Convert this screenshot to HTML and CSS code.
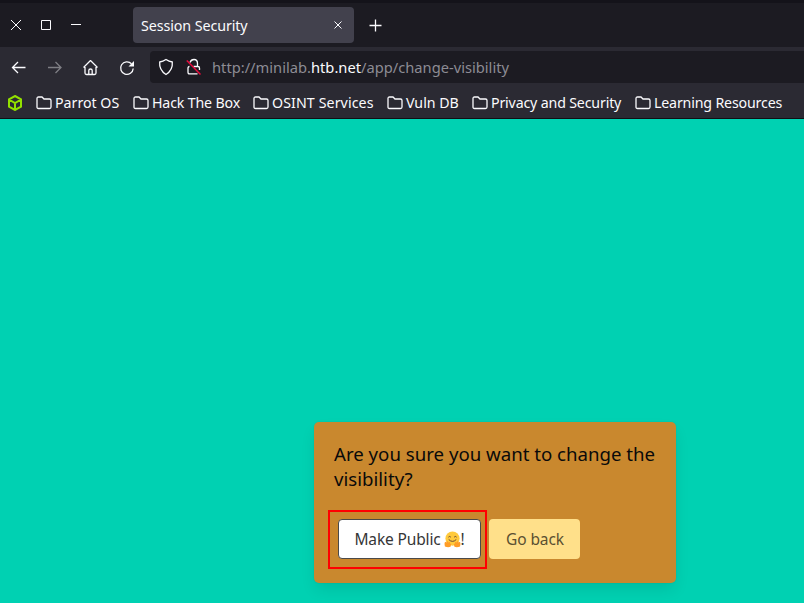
FILE: index.html
```html
<!DOCTYPE html>
<html lang="en">
<head>
<meta charset="utf-8">
<title>Session Security</title>
<link rel="stylesheet" href="styles.css">
</head>
<body>
<header class="browser">
  <div class="tabs">
    <div class="window-controls">
      <svg width="12" height="12" viewBox="0 0 12 12"><path d="M1 1l10 10M11 1L1 11"/></svg>
      <svg width="12" height="12" viewBox="0 0 12 12"><path d="M1.5 1.5h9v9h-9z"/></svg>
      <svg width="12" height="12" viewBox="0 0 12 12"><path d="M1 5.5h10"/></svg>
    </div>
    <div class="tab"><span class="tab-title">Session Security</span>
      <svg width="8" height="8" viewBox="0 0 8 8"><path d="M.5.5l7 7M7.5.5l-7 7"/></svg>
    </div>
    <svg class="new-tab" width="13" height="13" viewBox="0 0 13 13"><path d="M6.5.5v12M.5 6.5h12"/></svg>
  </div>
  <div class="toolbar">
    <nav class="nav">
      <svg width="16" height="16" viewBox="0 0 16 16"><path d="M14.500 7.500H1.500M7 2L1.500 7.500 7 13"/></svg>
      <svg class="disabled" width="16" height="16" viewBox="0 0 16 16"><path d="M1 7.500h13M8.500 2L14 7.500 8.500 13"/></svg>
      <svg width="16" height="16" viewBox="0 0 16 16"><path d="M.5 7.500l7-7 7 7M2 7v6q0 1.500 1.500 1.500h8q1.500 0 1.500-1.500V7M5.800 14.500v-4q0-1.500 1.700-1.500t1.700 1.500v4"/></svg>
      <svg width="16" height="16" viewBox="0 0 16 16"><path d="M14.200 8.500A6.300 6.300 0 1 1 12.500 3.800"/><path class="solid" d="M15 1v5.500H9.500z"/></svg>
    </nav>
    <div class="address">
      <svg width="16" height="18" viewBox="0 0 16 18"><path d="M8 1.500Q11 3.600 14.300 4q.7 8-6.300 12.500Q1 12 1.700 4 5 3.600 8 1.500z"/></svg>
      <svg class="lock" width="16" height="18" viewBox="0 0 16 18"><path d="M4 4.500Q5 1.500 8 1.500q3.500 0 3.500 4V8M7.500 8.500H12q1.500 0 1.500 1.500v2M11.500 15.800H3.500Q2 15.800 2 14.300V10q0-1.500 1.500-1.500"/><path class="slash" d="M.8 2.500l13.700 14"/></svg>
      <span class="url">http://minilab.<b>htb.net</b>/app/change-visibility</span>
    </div>
  </div>
  <div class="bookmarks">
    <svg class="cube" width="16" height="16" viewBox="0 0 16 16"><path d="M8 1l6 3.300v7.400L8 15l-6-3.300V4.300zM2 4.500L8 8l6-3.500M8 8v7"/></svg>
    <div class="bookmark b1"><svg width="16" height="14" viewBox="0 0 16 14"><path d="M1 11V2.500Q1 1 2.500 1H6l2 2h5.500Q15 3 15 4.500V11q0 1.500-1.500 1.500h-11Q1 12.500 1 11z"/></svg><span>Parrot OS</span></div>
    <div class="bookmark b2"><svg width="16" height="14" viewBox="0 0 16 14"><path d="M1 11V2.500Q1 1 2.500 1H6l2 2h5.500Q15 3 15 4.500V11q0 1.500-1.500 1.500h-11Q1 12.500 1 11z"/></svg><span>Hack The Box</span></div>
    <div class="bookmark b3"><svg width="16" height="14" viewBox="0 0 16 14"><path d="M1 11V2.500Q1 1 2.500 1H6l2 2h5.500Q15 3 15 4.500V11q0 1.500-1.500 1.500h-11Q1 12.500 1 11z"/></svg><span>OSINT Services</span></div>
    <div class="bookmark b4"><svg width="16" height="14" viewBox="0 0 16 14"><path d="M1 11V2.500Q1 1 2.500 1H6l2 2h5.500Q15 3 15 4.500V11q0 1.500-1.500 1.500h-11Q1 12.500 1 11z"/></svg><span>Vuln DB</span></div>
    <div class="bookmark b5"><svg width="16" height="14" viewBox="0 0 16 14"><path d="M1 11V2.500Q1 1 2.500 1H6l2 2h5.500Q15 3 15 4.500V11q0 1.500-1.500 1.500h-11Q1 12.500 1 11z"/></svg><span>Privacy and Security</span></div>
    <div class="bookmark b6"><svg width="16" height="14" viewBox="0 0 16 14"><path d="M1 11V2.500Q1 1 2.500 1H6l2 2h5.500Q15 3 15 4.500V11q0 1.500-1.500 1.500h-11Q1 12.500 1 11z"/></svg><span>Learning Resources</span></div>
  </div>
</header>
<main class="page">
  <section class="card">
    <p class="question">Are you sure you want to change the<br>visibility?</p>
    <div class="actions">
      <div class="highlight">
        <button class="button public"><span>Make Public</span><svg class="hug" width="17" height="17" viewBox="0 0 18 17"><circle class="face" cx="9" cy="7.500" r="7.500"/><path class="features" d="M4.700 6q1.200-1.500 2.500 0M10.800 6q1.200-1.500 2.500 0M5 8.500q4 4 8 0"/><path class="hands" d="M1 16q-1-4 .3-5l1.200.8.8-2 1.300 2 1.500-1 .3 2 1.300.5-.8 3Q4 17 1 16zM17 16q1-4-.3-5l-1.200.8-.8-2-1.300 2-1.500-1-.3 2-1.300.5.800 3Q14 17 17 16z"/></svg><span>!</span></button>
      </div>
      <button class="button back">Go back</button>
    </div>
  </section>
</main>
</body>
</html>
```
FILE: styles.css
```css
* { box-sizing: border-box; }
body { margin: 0; width: 804px; height: 603px; overflow: hidden; background: #00d1b2; font-family: "Noto Sans", sans-serif; }
svg { display: block; flex: none; fill: none; stroke: #fbfbfe; stroke-width: 1.3; }
.browser { height: 119px; background: #2b2a33; border-bottom: 1px solid #101014; color: #fbfbfe; }
.tabs { height: 47px; display: flex; align-items: flex-start; background: #1c1b22; border-top: 3px solid #14131a; }
.window-controls { width: 133px; padding: 16px 0 0 10px; display: flex; gap: 18px; }
.window-controls svg { stroke-width: 1; }
.tab { width: 221px; height: 36px; margin-top: 4px; padding: 0 12px 0 8px; display: flex; align-items: center; justify-content: space-between; border-radius: 4px; background: #42414d; font-size: 14.300px; letter-spacing: -.1px; }
.tab svg { stroke-width: 1; }
.new-tab { margin: 16px 0 0 15px; }
.toolbar { height: 40px; padding-top: 4px; display: flex; }
.nav { width: 150px; padding: 9px 0 0 11px; display: flex; gap: 20px; }
.disabled { opacity: .4; }
.address { flex: 1; height: 32px; padding-left: 8px; display: flex; align-items: center; border-radius: 4px 0 0 4px; background: #1c1b22; }
.lock { margin-left: 12px; }
.slash { stroke: #e80b3d; stroke-width: 1.500; }
.url { margin-left: 10px; font-size: 14.700px; color: #8d8c94; white-space: nowrap; }
.url b { font-weight: 400; color: #fbfbfe; }
.solid { fill: #fbfbfe; stroke: none; }
.bookmarks { height: 31px; padding-left: 7px; display: flex; align-items: center; }
.cube { margin-right: 12px; stroke: #92e000; stroke-width: 2; }
.bookmark { display: flex; align-items: center; gap: 4px; flex: none; font-size: 14.200px; letter-spacing: -.16px; white-space: nowrap; }
.bookmark svg { position: relative; left: .5px; }
.b1 { width: 97px; letter-spacing: 0; } .b2 { width: 120px; } .b3 { width: 134px; letter-spacing: .1px; } .b4 { width: 85px; letter-spacing: 0; } .b5 { width: 163px; }
.page { padding: 303px 0 0 314px; }
.card { width: 362px; height: 161px; padding: 19px 14px 0; border-radius: 5px; background: #c9882e; box-shadow: 0 8px 16px -2px rgba(10,10,10,.1), 0 0 0 1px rgba(10,10,10,.02); }
.question { margin: 0; padding-left: 6px; font-size: 18.650px; line-height: 25px; color: #0a0a0a; white-space: nowrap; }
.actions { margin-top: 19px; display: flex; align-items: flex-start; gap: 2px; }
.highlight { width: 159px; height: 59px; padding: 7px 4px 0 8px; border: 2px solid #f00; }
.button { height: 40px; display: flex; align-items: center; justify-content: center; padding: 0; border: 1px solid transparent; border-radius: 4px; font: 15.500px "Noto Sans", sans-serif; white-space: nowrap; }
.public { width: 143px; background: #fff; border-color: #4a4a4a; color: #363636; letter-spacing: -.15px; }
.hug { margin: 0 0 0 3px; }
.hug .face { fill: #ffca3d; stroke: none; }
.hug .features { stroke: #5d4037; stroke-width: 1; }
.hug .hands { fill: #ff9d26; stroke: none; }
.back { width: 91px; margin-top: 9px; padding-left: 1px; background: #ffe08a; color: #5b5031; letter-spacing: -.1px; }
```
